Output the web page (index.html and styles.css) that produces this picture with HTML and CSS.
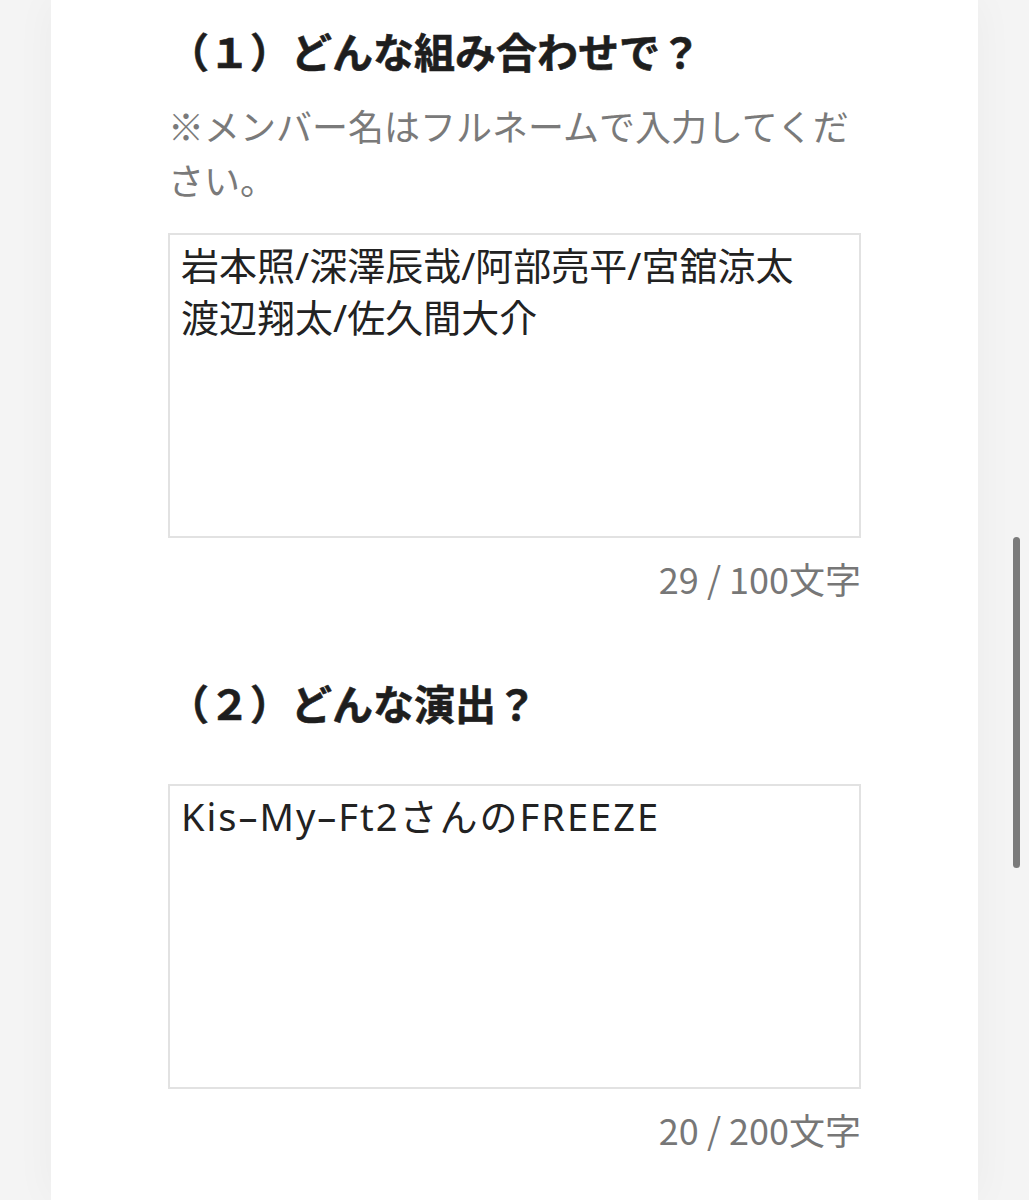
FILE: index.html
```html
<!DOCTYPE html>
<html lang="ja">
<head>
<meta charset="utf-8">
<title>アンケート</title>
<link rel="stylesheet" href="styles.css">
</head>
<body>
<div class="page">
  <form class="form">
    <div class="q">
      <h2 class="q-title">（１）どんな組み合わせで？</h2>
      <p class="q-note">※メンバー名はフルネームで入力してください。</p>
      <textarea class="q-input" readonly>岩本照/深澤辰哉/阿部亮平/宮舘涼太
渡辺翔太/佐久間大介</textarea>
      <p class="q-count">29 / 100文字</p>
    </div>
    <div class="q q-2">
      <h2 class="q-title">（２）どんな演出？</h2>
      <textarea class="q-input q-input-latin" readonly>Kis–My–Ft2さんのFREEZE</textarea>
      <p class="q-count">20 / 200文字</p>
    </div>
  </form>
</div>
<div class="scrollbar"></div>
</body>
</html>
```

FILE: styles.css
```css
html,body,h2,p,form{margin:0;padding:0;}
body{background:#f4f4f4;font-family:"Noto Sans CJK JP","Noto Sans",sans-serif;color:#222;}
.page{width:927px;min-height:1200px;margin:0 auto;background:#fff;box-shadow:0 0 40px rgba(0,0,0,.04);}
.form{width:693px;margin:0 auto;padding-top:20px;}
.q-title{font-size:41px;line-height:60px;font-weight:700;color:#1e1e1e;-webkit-text-stroke:.6px #1e1e1e;}
.q-note{margin-top:18px;font-size:36px;line-height:54px;color:#7a7a7a;}
.q-input{display:block;box-sizing:border-box;width:693px;height:305px;margin-top:27px;padding:4px 11px;border:2px solid #e2e2e2;border-radius:0;font:38px/52px "Noto Sans","Noto Sans CJK JP",sans-serif;color:#222;resize:none;outline:none;background:#fff;overflow:hidden;}
.q-input-latin{letter-spacing:2px;}
.q-count{margin-top:13px;text-align:right;font-size:36px;line-height:54px;color:#777;}
.q-2{margin-top:67px;}
.q-2 .q-input{margin-top:52px;}
.scrollbar{position:fixed;top:537px;left:1013px;width:7px;height:331px;border-radius:4px;background:#7b7b7b;}
```
